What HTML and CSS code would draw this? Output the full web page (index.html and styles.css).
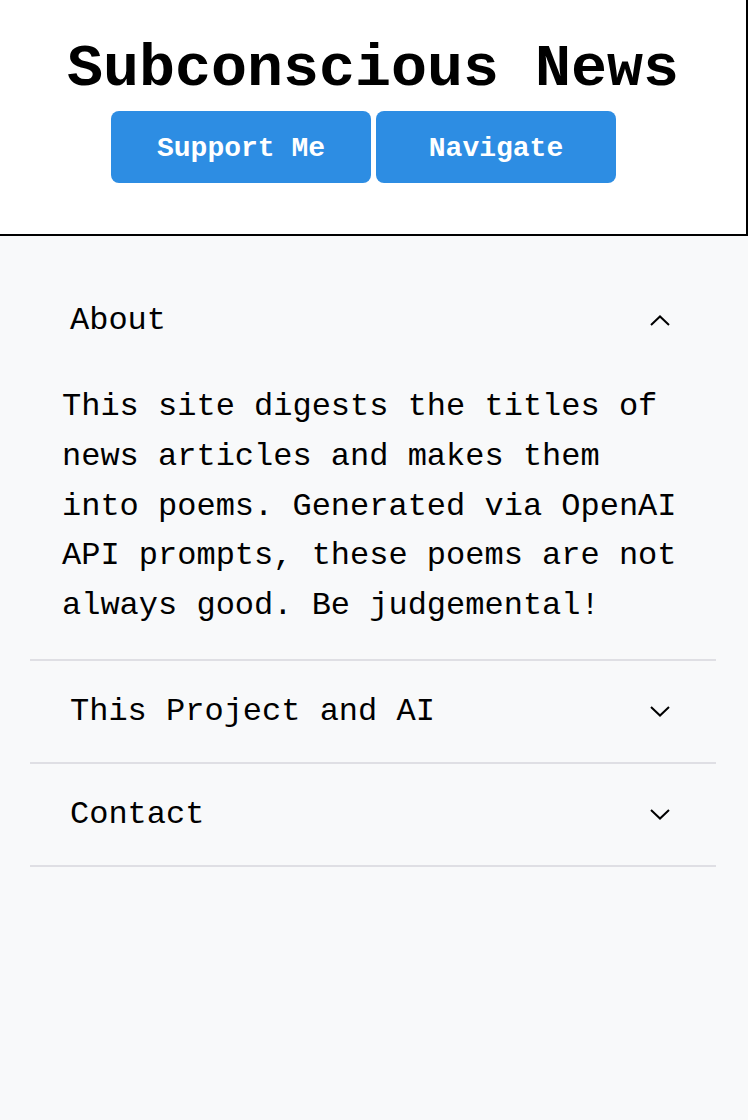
FILE: index.html
```html
<!DOCTYPE html>
<html lang="en">
<head>
<meta charset="utf-8">
<title>Subconscious News</title>
<link rel="stylesheet" href="styles.css">
</head>
<body>
<header class="site-header">
  <h1 class="site-title">Subconscious News</h1>
  <div class="actions">
    <button class="btn btn-support">Support Me</button>
    <button class="btn btn-nav">Navigate</button>
  </div>
</header>
<main class="content">
  <section class="accordion">
    <div class="acc-item">
      <div class="acc-header">
        <span>About</span>
        <svg class="chev" width="20" height="11" viewBox="0 0 20 11"><polyline points="1,10 10,1.5 19,10" fill="none" stroke="#000" stroke-width="2"/></svg>
      </div>
      <div class="acc-body">This site digests the titles of news articles and makes them into poems. Generated via OpenAI API prompts, these poems are not always good. Be judgemental!</div>
    </div>
    <div class="acc-item">
      <div class="acc-header">
        <span>This Project and AI</span>
        <svg class="chev" width="20" height="11" viewBox="0 0 20 11"><polyline points="1,1 10,9.5 19,1" fill="none" stroke="#000" stroke-width="2"/></svg>
      </div>
    </div>
    <div class="acc-item">
      <div class="acc-header">
        <span>Contact</span>
        <svg class="chev" width="20" height="11" viewBox="0 0 20 11"><polyline points="1,1 10,9.5 19,1" fill="none" stroke="#000" stroke-width="2"/></svg>
      </div>
    </div>
  </section>
</main>
</body>
</html>
```

FILE: styles.css
```css
html, body {
  margin: 0;
  padding: 0;
}
body {
  background: #f8f9fa;
  color: #000;
  font-family: "Nimbus Mono PS", "Courier New", "Liberation Mono", monospace;
  min-height: 1120px;
}
.site-header {
  background: #fff;
  border-right: 2px solid #000;
  border-bottom: 2px solid #000;
  padding: 35px 0 51px;
  text-align: center;
}
.site-title {
  margin: 0;
  font-size: 60px;
  font-weight: bold;
  line-height: 68px;
}
.actions {
  display: flex;
  justify-content: center;
  gap: 5px;
  margin-top: 8px;
  padding-right: 19px;
}
.btn {
  font-family: inherit;
  font-size: 28px;
  font-weight: bold;
  color: #fff;
  background: #2d8de3;
  border: none;
  border-radius: 8px;
  height: 72px;
  padding: 2px 0 0;
}
.btn-support { width: 260px; }
.btn-nav { width: 240px; }
.content {
  padding: 34px 32px 0 30px;
}
.acc-item {
  border-bottom: 2px solid #dfdfe4;
}
.acc-header {
  display: flex;
  justify-content: space-between;
  align-items: center;
  padding: 32px 46px 32px 40px;
  font-size: 32px;
  line-height: 37px;
}
.chev {
  display: block;
}
.acc-body {
  font-size: 32px;
  line-height: 49.75px;
  padding: 11px 0 28px 32px;
  width: 624px;
}
```
